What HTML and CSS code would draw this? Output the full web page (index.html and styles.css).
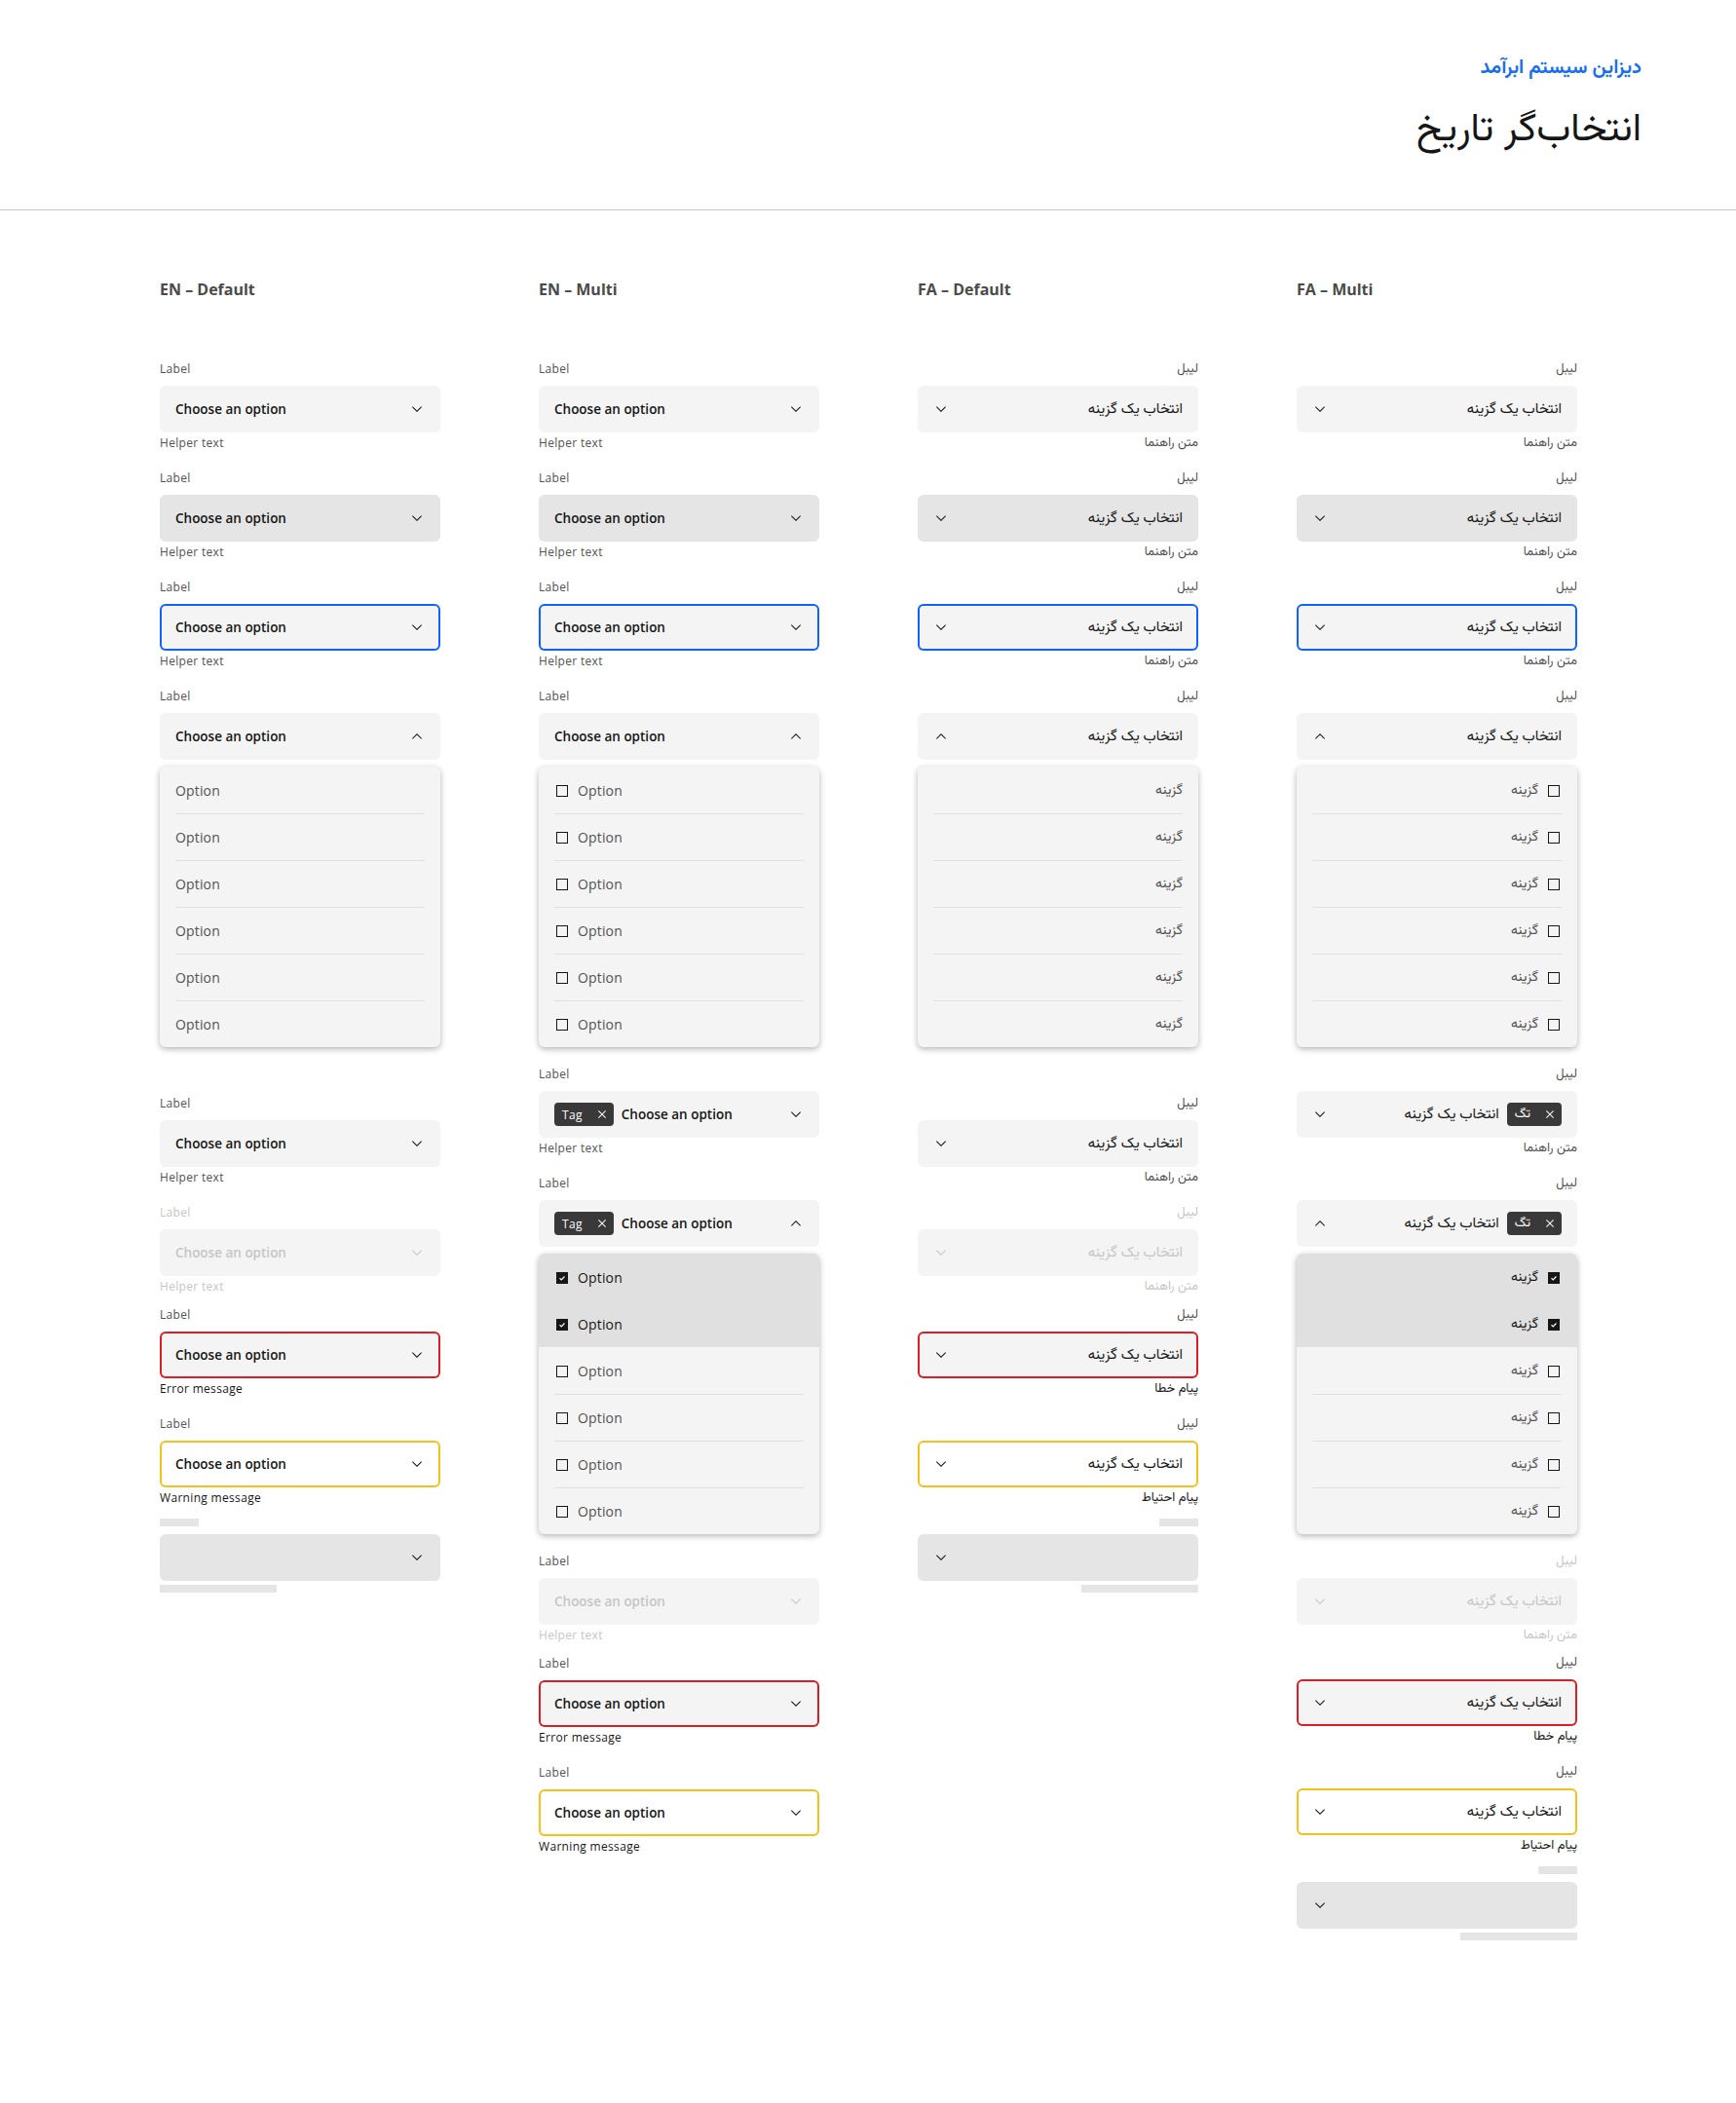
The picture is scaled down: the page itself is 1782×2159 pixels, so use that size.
FILE: index.html
```html
<!DOCTYPE html>
<html lang="fa">
<head>
  <meta charset="UTF-8">
  <meta name="viewport" content="width=device-width, initial-scale=1.0">
  <title>انتخاب‌گر تاریخ</title>
  <link rel="stylesheet" href="styles.css">
</head>
<body>
  <svg class="sprite" xmlns="http://www.w3.org/2000/svg">
    <symbol id="down" viewBox="0 0 16 16"><path d="M8 11L3 6l.7-.7L8 9.6l4.3-4.3.7.7z"/></symbol>
    <symbol id="up" viewBox="0 0 16 16"><path d="M8 5l5 5-.7.7L8 6.4l-4.3 4.3L3 10z"/></symbol>
    <symbol id="close" viewBox="0 0 16 16"><path d="M12 4.7l-.7-.7L8 7.3 4.7 4l-.7.7L7.3 8 4 11.3l.7.7L8 8.7l3.3 3.3.7-.7L8.7 8z"/></symbol>
    <symbol id="tick" viewBox="0 0 12 12"><path d="M3 6.2l2 2 4-4" fill="none" stroke="#fff" stroke-width="1.4"/></symbol>
  </svg>

  <header class="page-header">
    <p class="brand">دیزاین سیستم ابرآمد</p>
    <h1 class="page-title">انتخاب‌گر تاریخ</h1>
  </header>

  <main class="columns">

    <!-- EN default -->
    <section class="column">
      <h2 class="column-title">EN – Default</h2>

      <div class="field">
        <div class="label">Label</div>
        <div class="select"><span class="value">Choose an option</span><svg class="icon"><use href="#down"/></svg></div>
        <div class="helper">Helper text</div>
      </div>
      <div class="field">
        <div class="label">Label</div>
        <div class="select -hover"><span class="value">Choose an option</span><svg class="icon"><use href="#down"/></svg></div>
        <div class="helper">Helper text</div>
      </div>
      <div class="field">
        <div class="label">Label</div>
        <div class="select -focus"><span class="value">Choose an option</span><svg class="icon"><use href="#down"/></svg></div>
        <div class="helper">Helper text</div>
      </div>
      <div class="field -wide">
        <div class="label">Label</div>
        <div class="select"><span class="value">Choose an option</span><svg class="icon"><use href="#up"/></svg></div>
        <div class="menu">
          <div class="option"><div class="option-row">Option</div></div>
          <div class="option"><div class="option-row">Option</div></div>
          <div class="option"><div class="option-row">Option</div></div>
          <div class="option"><div class="option-row">Option</div></div>
          <div class="option"><div class="option-row">Option</div></div>
          <div class="option"><div class="option-row">Option</div></div>
        </div>
      </div>
      <div class="field">
        <div class="label">Label</div>
        <div class="select"><span class="value">Choose an option</span><svg class="icon"><use href="#down"/></svg></div>
        <div class="helper">Helper text</div>
      </div>
      <div class="field -disabled -short">
        <div class="label">Label</div>
        <div class="select"><span class="value">Choose an option</span><svg class="icon"><use href="#down"/></svg></div>
        <div class="helper">Helper text</div>
      </div>
      <div class="field">
        <div class="label">Label</div>
        <div class="select -error"><span class="value">Choose an option</span><svg class="icon"><use href="#down"/></svg></div>
        <div class="helper -strong">Error message</div>
      </div>
      <div class="field">
        <div class="label">Label</div>
        <div class="select -warning"><span class="value">Choose an option</span><svg class="icon"><use href="#down"/></svg></div>
        <div class="helper -strong">Warning message</div>
      </div>
      <div class="skeleton">
        <div class="bone -short"></div>
        <div class="select -skeleton"><svg class="icon"><use href="#down"/></svg></div>
        <div class="bone -long"></div>
      </div>
    </section>

    <!-- EN multi -->
    <section class="column">
      <h2 class="column-title">EN – Multi</h2>

      <div class="field">
        <div class="label">Label</div>
        <div class="select"><span class="value">Choose an option</span><svg class="icon"><use href="#down"/></svg></div>
        <div class="helper">Helper text</div>
      </div>
      <div class="field">
        <div class="label">Label</div>
        <div class="select -hover"><span class="value">Choose an option</span><svg class="icon"><use href="#down"/></svg></div>
        <div class="helper">Helper text</div>
      </div>
      <div class="field">
        <div class="label">Label</div>
        <div class="select -focus"><span class="value">Choose an option</span><svg class="icon"><use href="#down"/></svg></div>
        <div class="helper">Helper text</div>
      </div>
      <div class="field">
        <div class="label">Label</div>
        <div class="select"><span class="value">Choose an option</span><svg class="icon"><use href="#up"/></svg></div>
        <div class="menu">
          <div class="option"><div class="option-row"><span class="checkbox"></span>Option</div></div>
          <div class="option"><div class="option-row"><span class="checkbox"></span>Option</div></div>
          <div class="option"><div class="option-row"><span class="checkbox"></span>Option</div></div>
          <div class="option"><div class="option-row"><span class="checkbox"></span>Option</div></div>
          <div class="option"><div class="option-row"><span class="checkbox"></span>Option</div></div>
          <div class="option"><div class="option-row"><span class="checkbox"></span>Option</div></div>
        </div>
      </div>
      <div class="field">
        <div class="label">Label</div>
        <div class="select">
          <span class="tag">Tag<svg class="tag-close"><use href="#close"/></svg></span>
          <span class="value">Choose an option</span><svg class="icon"><use href="#down"/></svg>
        </div>
        <div class="helper">Helper text</div>
      </div>
      <div class="field">
        <div class="label">Label</div>
        <div class="select">
          <span class="tag">Tag<svg class="tag-close"><use href="#close"/></svg></span>
          <span class="value">Choose an option</span><svg class="icon"><use href="#up"/></svg>
        </div>
        <div class="menu">
          <div class="option -checked"><div class="option-row"><span class="checkbox"><svg><use href="#tick"/></svg></span>Option</div></div>
          <div class="option -checked"><div class="option-row"><span class="checkbox"><svg><use href="#tick"/></svg></span>Option</div></div>
          <div class="option"><div class="option-row"><span class="checkbox"></span>Option</div></div>
          <div class="option"><div class="option-row"><span class="checkbox"></span>Option</div></div>
          <div class="option"><div class="option-row"><span class="checkbox"></span>Option</div></div>
          <div class="option"><div class="option-row"><span class="checkbox"></span>Option</div></div>
        </div>
      </div>
      <div class="field -disabled -keep-label -short">
        <div class="label">Label</div>
        <div class="select"><span class="value">Choose an option</span><svg class="icon"><use href="#down"/></svg></div>
        <div class="helper">Helper text</div>
      </div>
      <div class="field">
        <div class="label">Label</div>
        <div class="select -error"><span class="value">Choose an option</span><svg class="icon"><use href="#down"/></svg></div>
        <div class="helper -strong">Error message</div>
      </div>
      <div class="field">
        <div class="label">Label</div>
        <div class="select -warning"><span class="value">Choose an option</span><svg class="icon"><use href="#down"/></svg></div>
        <div class="helper -strong">Warning message</div>
      </div>
    </section>

    <!-- FA default -->
    <section class="column -fa">
      <h2 class="column-title">FA – Default</h2>

      <div class="field">
        <div class="label">لیبل</div>
        <div class="select"><span class="value">انتخاب یک گزینه</span><svg class="icon"><use href="#down"/></svg></div>
        <div class="helper">متن راهنما</div>
      </div>
      <div class="field">
        <div class="label">لیبل</div>
        <div class="select -hover"><span class="value">انتخاب یک گزینه</span><svg class="icon"><use href="#down"/></svg></div>
        <div class="helper">متن راهنما</div>
      </div>
      <div class="field">
        <div class="label">لیبل</div>
        <div class="select -focus"><span class="value">انتخاب یک گزینه</span><svg class="icon"><use href="#down"/></svg></div>
        <div class="helper">متن راهنما</div>
      </div>
      <div class="field -wide">
        <div class="label">لیبل</div>
        <div class="select"><span class="value">انتخاب یک گزینه</span><svg class="icon"><use href="#up"/></svg></div>
        <div class="menu">
          <div class="option"><div class="option-row">گزینه</div></div>
          <div class="option"><div class="option-row">گزینه</div></div>
          <div class="option"><div class="option-row">گزینه</div></div>
          <div class="option"><div class="option-row">گزینه</div></div>
          <div class="option"><div class="option-row">گزینه</div></div>
          <div class="option"><div class="option-row">گزینه</div></div>
        </div>
      </div>
      <div class="field">
        <div class="label">لیبل</div>
        <div class="select"><span class="value">انتخاب یک گزینه</span><svg class="icon"><use href="#down"/></svg></div>
        <div class="helper">متن راهنما</div>
      </div>
      <div class="field -disabled -short">
        <div class="label">لیبل</div>
        <div class="select"><span class="value">انتخاب یک گزینه</span><svg class="icon"><use href="#down"/></svg></div>
        <div class="helper">متن راهنما</div>
      </div>
      <div class="field">
        <div class="label">لیبل</div>
        <div class="select -error"><span class="value">انتخاب یک گزینه</span><svg class="icon"><use href="#down"/></svg></div>
        <div class="helper -strong">پیام خطا</div>
      </div>
      <div class="field">
        <div class="label">لیبل</div>
        <div class="select -warning"><span class="value">انتخاب یک گزینه</span><svg class="icon"><use href="#down"/></svg></div>
        <div class="helper -strong">پیام احتیاط</div>
      </div>
      <div class="skeleton">
        <div class="bone -short"></div>
        <div class="select -skeleton"><svg class="icon"><use href="#down"/></svg></div>
        <div class="bone -long"></div>
      </div>
    </section>

    <!-- FA multi -->
    <section class="column -fa">
      <h2 class="column-title">FA – Multi</h2>

      <div class="field">
        <div class="label">لیبل</div>
        <div class="select"><span class="value">انتخاب یک گزینه</span><svg class="icon"><use href="#down"/></svg></div>
        <div class="helper">متن راهنما</div>
      </div>
      <div class="field">
        <div class="label">لیبل</div>
        <div class="select -hover"><span class="value">انتخاب یک گزینه</span><svg class="icon"><use href="#down"/></svg></div>
        <div class="helper">متن راهنما</div>
      </div>
      <div class="field">
        <div class="label">لیبل</div>
        <div class="select -focus"><span class="value">انتخاب یک گزینه</span><svg class="icon"><use href="#down"/></svg></div>
        <div class="helper">متن راهنما</div>
      </div>
      <div class="field">
        <div class="label">لیبل</div>
        <div class="select"><span class="value">انتخاب یک گزینه</span><svg class="icon"><use href="#up"/></svg></div>
        <div class="menu">
          <div class="option"><div class="option-row"><span class="checkbox"></span>گزینه</div></div>
          <div class="option"><div class="option-row"><span class="checkbox"></span>گزینه</div></div>
          <div class="option"><div class="option-row"><span class="checkbox"></span>گزینه</div></div>
          <div class="option"><div class="option-row"><span class="checkbox"></span>گزینه</div></div>
          <div class="option"><div class="option-row"><span class="checkbox"></span>گزینه</div></div>
          <div class="option"><div class="option-row"><span class="checkbox"></span>گزینه</div></div>
        </div>
      </div>
      <div class="field">
        <div class="label">لیبل</div>
        <div class="select">
          <span class="tag">تگ<svg class="tag-close"><use href="#close"/></svg></span>
          <span class="value">انتخاب یک گزینه</span><svg class="icon"><use href="#down"/></svg>
        </div>
        <div class="helper">متن راهنما</div>
      </div>
      <div class="field">
        <div class="label">لیبل</div>
        <div class="select">
          <span class="tag">تگ<svg class="tag-close"><use href="#close"/></svg></span>
          <span class="value">انتخاب یک گزینه</span><svg class="icon"><use href="#up"/></svg>
        </div>
        <div class="menu">
          <div class="option -checked"><div class="option-row"><span class="checkbox"><svg><use href="#tick"/></svg></span>گزینه</div></div>
          <div class="option -checked"><div class="option-row"><span class="checkbox"><svg><use href="#tick"/></svg></span>گزینه</div></div>
          <div class="option"><div class="option-row"><span class="checkbox"></span>گزینه</div></div>
          <div class="option"><div class="option-row"><span class="checkbox"></span>گزینه</div></div>
          <div class="option"><div class="option-row"><span class="checkbox"></span>گزینه</div></div>
          <div class="option"><div class="option-row"><span class="checkbox"></span>گزینه</div></div>
        </div>
      </div>
      <div class="field -disabled -shorter">
        <div class="label">لیبل</div>
        <div class="select"><span class="value">انتخاب یک گزینه</span><svg class="icon"><use href="#down"/></svg></div>
        <div class="helper">متن راهنما</div>
      </div>
      <div class="field">
        <div class="label">لیبل</div>
        <div class="select -error"><span class="value">انتخاب یک گزینه</span><svg class="icon"><use href="#down"/></svg></div>
        <div class="helper -strong">پیام خطا</div>
      </div>
      <div class="field">
        <div class="label">لیبل</div>
        <div class="select -warning"><span class="value">انتخاب یک گزینه</span><svg class="icon"><use href="#down"/></svg></div>
        <div class="helper -strong">پیام احتیاط</div>
      </div>
      <div class="skeleton">
        <div class="bone -short"></div>
        <div class="select -skeleton"><svg class="icon"><use href="#down"/></svg></div>
        <div class="bone -long"></div>
      </div>
    </section>

  </main>
</body>
</html>
```

FILE: styles.css
```css
*, *::before, *::after {
  box-sizing: border-box;
}
body {
  margin: 0;
  background: #fff;
  color: #161616;
  font-family: "Open Sans", "Noto Sans", "DejaVu Sans", sans-serif;
}
.sprite {
  position: absolute;
  width: 0;
  height: 0;
  overflow: hidden;
}

/* header */
.page-header {
  direction: rtl;
  padding: 57px 97px 56px;
  border-bottom: 1px solid #c6c6c6;
  font-family: "Vazirmatn", "Noto Sans Arabic", "DejaVu Sans", sans-serif;
}
.brand {
  margin: 0;
  font-size: 20px;
  line-height: 26px;
  font-weight: 700;
  color: #1a6ff0;
}
.page-title {
  margin: 26px 0 0;
  font-size: 40px;
  line-height: 50px;
  font-weight: 400;
  color: #161616;
}

/* columns */
.columns {
  display: grid;
  grid-template-columns: repeat(4, 288px);
  column-gap: 101px;
  align-items: start;
  padding: 69px 0 120px 164px;
}
.column-title {
  direction: ltr;
  text-align: left;
  margin: 0 0 62px;
  font-family: "Open Sans", sans-serif;
  font-size: 16px;
  line-height: 24px;
  font-weight: 700;
  color: #4a4a4a;
}
.column.-fa {
  direction: rtl;
  font-family: "Vazirmatn", "Noto Sans Arabic", "DejaVu Sans", sans-serif;
}

/* field */
.field {
  margin-bottom: 20px;
}
.field.-wide {
  margin-bottom: 50px;
}
.field.-short {
  margin-bottom: 13px;
}
.field.-shorter {
  margin-bottom: 12px;
}
.label,
.helper {
  font-size: 12px;
  line-height: 16px;
  letter-spacing: .32px;
  color: #525252;
}
.label {
  margin-bottom: 9px;
}
.helper {
  margin-top: 3px;
}
.helper.-strong {
  color: #161616;
}
.select {
  display: flex;
  align-items: center;
  gap: 8px;
  height: 48px;
  padding: 0 16px;
  background: #f4f4f4;
  border-radius: 6px;
  color: #161616;
}
.value {
  font-size: 13.5px;
  font-weight: 600;
  white-space: nowrap;
}
.icon {
  flex: none;
  width: 16px;
  height: 16px;
  margin-inline-start: auto;
  fill: currentColor;
}
.select.-hover {
  background: #e5e5e5;
}
.select.-focus {
  box-shadow: inset 0 0 0 2px #0f62fe;
}
.select.-error {
  box-shadow: inset 0 0 0 2px #da1e28;
}
.select.-warning {
  background: #fff;
  box-shadow: inset 0 0 0 2px #f1c21b;
}
.field.-disabled .label,
.field.-disabled .helper,
.field.-disabled .select {
  color: #c6c6c6;
}
.field.-keep-label .label {
  color: #525252;
}

/* persian sizes */
.-fa .label,
.-fa .helper {
  font-size: 13px;
  letter-spacing: 0;
}
.-fa .value {
  font-size: 15px;
  font-weight: 400;
}
.-fa .option-row {
  font-size: 14px;
  letter-spacing: 0;
}
.-fa .tag {
  font-size: 13px;
}

/* tag */
.tag {
  flex: none;
  direction: ltr;
  display: flex;
  align-items: center;
  gap: 12px;
  height: 24px;
  padding: 0 4px 0 8px;
  background: #393939;
  border-radius: 4px;
  color: #fff;
  font-size: 12px;
  letter-spacing: .32px;
}
.tag-close {
  width: 16px;
  height: 16px;
  fill: #fff;
}

/* menu */
.menu {
  margin-top: 7px;
  background: #f4f4f4;
  border-radius: 6px;
  box-shadow: 0 2px 6px rgba(0, 0, 0, .3);
  overflow: hidden;
}
.option {
  padding: 0 16px;
}
.option-row {
  display: flex;
  align-items: center;
  gap: 10px;
  height: 48px;
  border-top: 1px solid #e0e0e0;
  font-size: 14px;
  letter-spacing: .16px;
  color: #525252;
}
.option:first-child .option-row,
.option.-checked .option-row,
.option.-checked + .option .option-row {
  border-top-color: transparent;
}
.option.-checked {
  background: #e0e0e0;
}
.option.-checked .option-row {
  color: #161616;
}
.checkbox {
  flex: none;
  width: 12px;
  height: 12px;
  margin-inline-start: 2px;
  border: 1px solid #161616;
  display: flex;
}
.option.-checked .checkbox {
  background: #161616;
}
.checkbox svg {
  width: 10px;
  height: 10px;
}

/* skeleton */
.skeleton {
  margin-top: -7px;
}
.bone {
  height: 8px;
  background: #e5e5e5;
}
.bone.-short {
  width: 40px;
  margin-bottom: 8px;
}
.bone.-long {
  width: 120px;
  margin-top: 4px;
}
.select.-skeleton {
  background: #e5e5e5;
}
```
